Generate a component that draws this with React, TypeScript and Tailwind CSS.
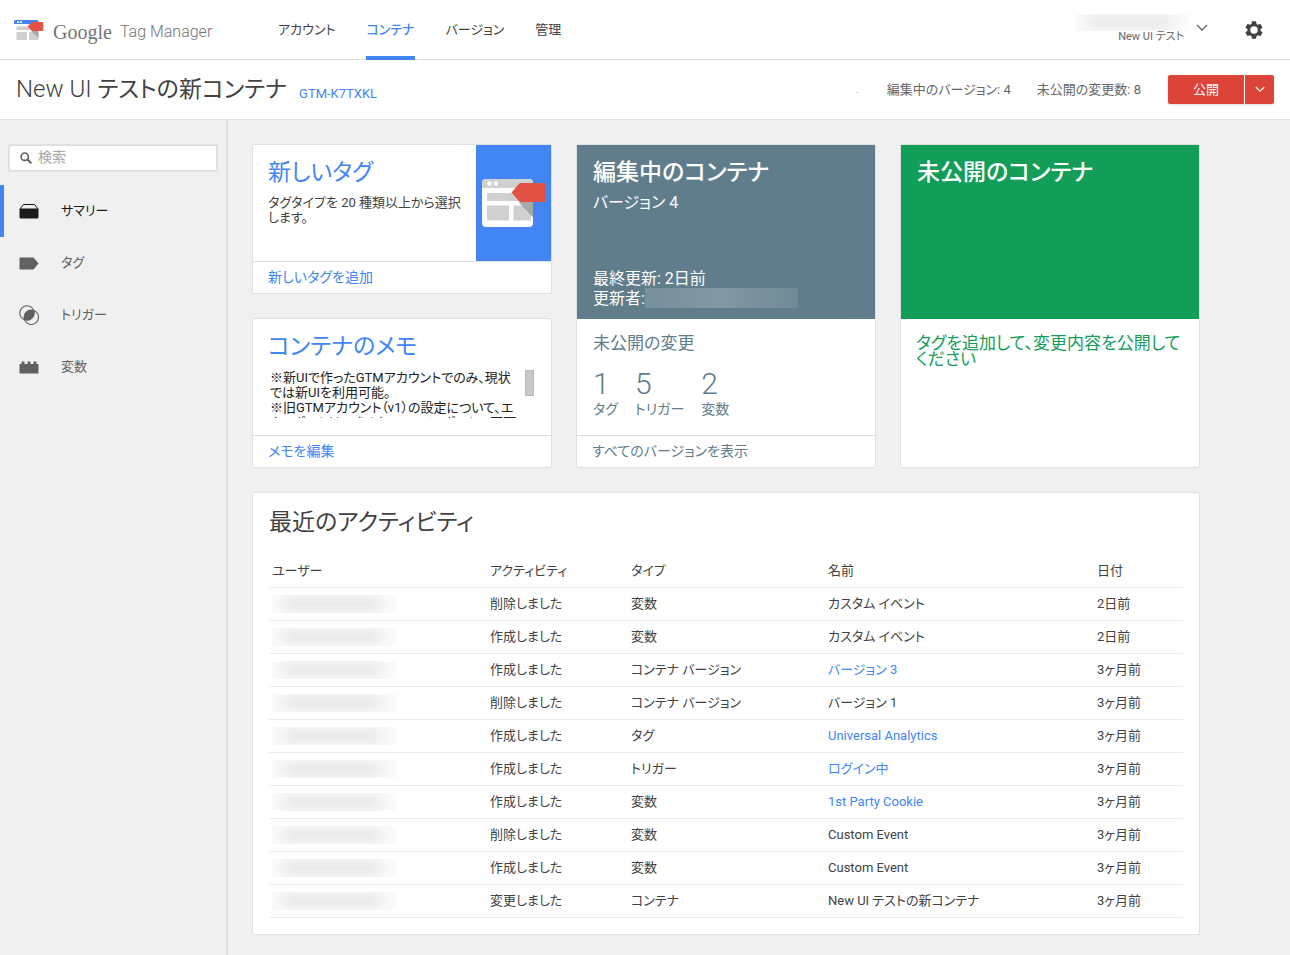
import type { ReactNode } from "react";

const card = "rounded-[2px] border border-[#e0e0e0] bg-white";
const cardFooter = "flex h-8 items-center border-t border-[#e0e0e0] px-[15px] pb-[2px] text-[14px]";
const heading = "text-[23px] leading-7";

function Chevron({ className }: { className: string }) {
  return (
    <svg className={className} viewBox="0 0 12 8" fill="none" stroke="currentColor" strokeWidth="1.3" aria-hidden="true">
      <path d="M1 1l5 5 5-5" />
    </svg>
  );
}

function BrandIcon() {
  return (
    <svg className="h-[22px] w-[30px]" viewBox="0 0 30 22" aria-hidden="true">
      <path fill="#4285f4" d="M1.500 1H23q1.500 0 1.500 1.500V5H0V2.500Q0 1 1.500 1z" />
      <path fill="#fff" d="M3 2.200h1.800V4H3zM6 2.200h1.800V4H6z" />
      <path fill="#cfcfcf" d="M2.500 7.500H17V11H2.500zM2.500 13h10.500v8H2.500zM15 13h9.500v8H15z" />
      <path fill="#a6a6a6" d="M17 12h7.500v6.500z" />
      <path fill="#e65245" d="M13.500 7.500 18 3h10.500q.8 0 .8.800v7.400q0 .8-.8.800H18z" />
    </svg>
  );
}

function TagArtwork() {
  return (
    <svg className="h-[50px] w-[64px]" viewBox="0 0 64 50" aria-hidden="true">
      <rect x="0" y="1" width="51" height="48" rx="4" fill="#fff" />
      <path fill="#d0d0d0" d="M4 1h43q4 0 4 4v5H0V5q0-4 4-4z" />
      <circle cx="7.500" cy="5.500" r="2.300" fill="#fff" />
      <circle cx="13.800" cy="5.500" r="2.300" fill="#fff" />
      <path fill="#d0d0d0" d="M5 15h32v8H5zM5 27.500h22v15H5zM31.500 27.500H49v15H31.500z" />
      <path fill="#a8a8a8" d="M36.500 24H51v15.500z" />
      <path fill="#e35044" d="M29.500 14.500 37 5.700q.7-.7 1.700-.7H62.500q1.500 0 1.500 1.500v16q0 1.500-1.500 1.500H38.700q-1 0-1.700-.7z" />
    </svg>
  );
}

function Redacted({ className }: { className: string }) {
  return (
    <div className={`overflow-hidden bg-[#fafafa] py-1 pr-4 pl-3 ${className}`}>
      <div className="h-full bg-[#e2e2e2] blur-[6px]" />
    </div>
  );
}

const navIcons: Record<string, ReactNode> = {
  summary: (
    <>
      <path d="M1 8 4 4q.3-.5 1-.5h10q.7 0 1 .5L19 8" fill="none" stroke="currentColor" strokeWidth="1" />
      <path d="M.5 7.500h19V16q0 1.500-1.500 1.500H2Q.5 17.500 .5 16z" fill="currentColor" />
    </>
  ),
  tag: <path d="M1 4.500h13.500L19.500 10.500l-5 6H1q-.5 0-.5-.5V5q0-.5.500-.5z" fill="currentColor" />,
  trigger: (
    <>
      <circle cx="8" cy="8" r="7.200" fill="none" stroke="currentColor" strokeWidth="1.100" />
      <circle cx="12.300" cy="12.300" r="7.200" fill="none" stroke="currentColor" strokeWidth="1.100" />
      <path d="M14.780 5.520A7.200 7.200 0 0 1 5.520 14.780 7.200 7.200 0 0 1 14.780 5.520z" fill="currentColor" />
    </>
  ),
  variable: (
    <path d="M.5 7H2.500V4.500h3V7h3V4.500h3V7h3V4.500h3V7h2v9.500H.5z" fill="currentColor" />
  ),
};

const sideItems = [
  { icon: "summary", label: "サマリー", active: true },
  { icon: "tag", label: "タグ", active: false },
  { icon: "trigger", label: "トリガー", active: false },
  { icon: "variable", label: "変数", active: false },
];

const tabs = [
  { label: "アカウント", active: false },
  { label: "コンテナ", active: true },
  { label: "バージョン", active: false },
  { label: "管理", active: false },
];

const stats = [
  { count: 1, label: "タグ" },
  { count: 5, label: "トリガー" },
  { count: 2, label: "変数" },
];

const rows = [
  { action: "削除しました", type: "変数", name: "カスタム イベント", link: false, date: "2日前" },
  { action: "作成しました", type: "変数", name: "カスタム イベント", link: false, date: "2日前" },
  { action: "作成しました", type: "コンテナ バージョン", name: "バージョン 3", link: true, date: "3ヶ月前" },
  { action: "削除しました", type: "コンテナ バージョン", name: "バージョン 1", link: false, date: "3ヶ月前" },
  { action: "作成しました", type: "タグ", name: "Universal Analytics", link: true, date: "3ヶ月前" },
  { action: "作成しました", type: "トリガー", name: "ログイン中", link: true, date: "3ヶ月前" },
  { action: "作成しました", type: "変数", name: "1st Party Cookie", link: true, date: "3ヶ月前" },
  { action: "削除しました", type: "変数", name: "Custom Event", link: false, date: "3ヶ月前" },
  { action: "作成しました", type: "変数", name: "Custom Event", link: false, date: "3ヶ月前" },
  { action: "変更しました", type: "コンテナ", name: "New UI テストの新コンテナ", link: false, date: "3ヶ月前" },
];

function Header() {
  return (
    <header className="flex h-15 items-stretch border-b border-[#e0e0e0] bg-white pr-[26px] pl-[14px]">
      <a href="#home" className="flex w-[264px] shrink-0 items-center text-[#757575]">
        <BrandIcon />
        <span className="ml-[9px] pt-1 font-['Liberation_Serif',serif] text-[20px] leading-6">Google</span>
        <span className="ml-2 pt-1 text-[16px] leading-6 font-light whitespace-nowrap">Tag Manager</span>
      </a>
      <nav className="flex gap-[31px]">
        {tabs.map((t) => (
          <a
            key={t.label}
            href="#tab"
            className={
              t.active
                ? "-mb-px flex items-center border-b-4 border-[#4285f4] pt-1 font-medium whitespace-nowrap text-[#4285f4]"
                : "flex items-center whitespace-nowrap"
            }
          >
            {t.label}
          </a>
        ))}
      </nav>
      <button type="button" className="mt-3 ml-auto flex h-8 items-center gap-2 text-[#666]" aria-label="アカウントを選択">
        <span className="flex flex-col items-end">
          <Redacted className="h-[17px] w-28" />
          <span className="pr-1 text-[11px] leading-3 whitespace-nowrap">New UI テスト</span>
        </span>
        <Chevron className="h-2 w-3" />
      </button>
      <button type="button" className="ml-[36px] text-[#424242]" aria-label="設定">
        <svg className="h-5 w-5" viewBox="1 1 22 22" fill="currentColor" aria-hidden="true">
          <path d="M19.140 12.940c.04-.3.060-.61.060-.94s-.02-.64-.07-.94l2.030-1.580a.49.490 0 0 0 .12-.61l-1.920-3.320a.488.488 0 0 0-.59-.22l-2.390.96c-.5-.38-1.030-.7-1.620-.94l-.36-2.540a.484.484 0 0 0-.48-.41h-3.840c-.24 0-.43.170-.47.410l-.36 2.540c-.59.240-1.130.570-1.620.940l-2.390-.96c-.22-.08-.47 0-.59.220L2.740 8.870c-.12.210-.08.470.12.610l2.030 1.580c-.05.300-.09.630-.09.940s.02.640.07.940l-2.030 1.580a.49.490 0 0 0-.12.610l1.920 3.320c.12.220.37.290.59.220l2.390-.96c.5.380 1.030.7 1.620.940l.36 2.540c.05.240.24.410.48.410h3.840c.24 0 .44-.17.470-.41l.36-2.540c.59-.24 1.130-.56 1.620-.94l2.390.96c.22.080.47 0 .59-.22l1.920-3.320c.12-.22.070-.47-.12-.61zM12 16.100a4.100 4.100 0 1 1 0-8.200 4.100 4.100 0 0 1 0 8.200z" />
        </svg>
      </button>
    </header>
  );
}

function TitleBar() {
  return (
    <div className="flex h-15 items-center border-b border-[#e0e0e0] bg-white px-4">
      <h1 className="text-[23px] leading-8 whitespace-nowrap">
        <span className="text-[24px] font-light">New UI </span>テストの新コンテナ
      </h1>
      <a href="#container" className="mt-2 ml-3 whitespace-nowrap text-[#4285f4]">
        GTM-K7TXKL
      </a>
      <div className="ml-auto flex items-center whitespace-nowrap text-[#666]">
        <span className="mr-7 text-[10px] text-[#dd9a6a]">.</span>
        <span>編集中のバージョン: 4</span>
        <span className="ml-[26px]">未公開の変更数: 8</span>
        <div className="ml-[27px] flex h-[29px] gap-px rounded-[2px] text-white shadow-sm">
          <button type="button" className="w-19 rounded-l-[2px] bg-[#db4437]">
            公開
          </button>
          <button type="button" className="flex w-[29px] items-center justify-center rounded-r-[2px] bg-[#db4437]" aria-label="公開オプション">
            <Chevron className="h-[7px] w-[10px]" />
          </button>
        </div>
      </div>
    </div>
  );
}

function Sidebar() {
  return (
    <aside className="w-57 shrink-0 border-r-2 border-[#e0e0e0] pt-6">
      <div className="mr-2 ml-2 flex h-7 items-center gap-[6px] rounded-[2px] border-2 border-[#e0e0e0] bg-white pl-[10px]">
        <svg className="h-3 w-3 shrink-0 text-[#616161]" viewBox="0 0 12 12" fill="none" stroke="currentColor" aria-hidden="true">
          <circle cx="4.700" cy="4.700" r="3.700" strokeWidth="1.600" />
          <path d="M7.500 7.500 11.300 11.300" strokeWidth="2" />
        </svg>
        <input
          type="search"
          aria-label="検索"
          placeholder="検索"
          className="w-full min-w-0 bg-transparent pb-[2px] text-[14px] leading-5 outline-none placeholder:text-[#a6a6a6]"
        />
      </div>
      <nav className="mt-[13px]">
        {sideItems.map((s) => (
          <a
            key={s.label}
            href="#section"
            className={
              s.active
                ? "flex h-13 items-center gap-[22px] border-l-4 border-[#4285f4] pl-[15px] text-[#1a1a1a]"
                : "flex h-13 items-center gap-[22px] border-l-4 border-transparent pl-[15px] text-[#616161]"
            }
          >
            <svg className="h-5 w-5" viewBox="0 0 20 20" aria-hidden="true">
              {navIcons[s.icon]}
            </svg>
            {s.label}
          </a>
        ))}
      </nav>
    </aside>
  );
}

function NewTagCard() {
  return (
    <section className={card}>
      <div className="flex h-[116px]">
        <div className="min-w-0 flex-1 pt-[14px] pr-2 pl-[15px]">
          <h2 className={`${heading} text-[#4285f4]`}>新しいタグ</h2>
          <p className="mt-2 leading-[15px]">タグタイプを 20 種類以上から選択します。</p>
        </div>
        <div className="flex w-[75px] items-center justify-center bg-[#4285f4]">
          <TagArtwork />
        </div>
      </div>
      <div className={cardFooter}>
        <a href="#new-tag" className="text-[#4285f4]">新しいタグを追加</a>
      </div>
    </section>
  );
}

function NotesCard() {
  return (
    <section className={card}>
      <div className="h-[116px] pt-[14px] pr-[17px] pl-[15px]">
        <h2 className={`${heading} text-[#4285f4]`}>コンテナのメモ</h2>
        <div className="mt-[9px] flex h-12 justify-between">
          <p className="overflow-hidden pl-[2px] leading-[15px] whitespace-nowrap text-[#212121]">
            ※新UIで作ったGTMアカウントでのみ、現状
            <br />
            では新UIを利用可能。
            <br />
            ※旧GTMアカウント（v1）の設定について、エ
            <br />
            クスポートはできるものの、インポートで不可
          </p>
          <div className="h-[26px] w-[9px] shrink-0 border border-[#b8b8b8] bg-[#c8c8c8]" />
        </div>
      </div>
      <div className={cardFooter}>
        <a href="#notes" className="text-[#4285f4]">メモを編集</a>
      </div>
    </section>
  );
}

function DraftCard() {
  return (
    <section className={`${card} flex flex-col text-[#607d8b]`}>
      <div className="flex h-[174px] flex-col bg-[#607d8b] px-4 pt-[14px] pb-[11px] text-white">
        <h2 className={`${heading} font-medium`}>編集中のコンテナ</h2>
        <p className="mt-[6px] text-[16px] leading-5">バージョン 4</p>
        <p className="mt-auto text-[16px] leading-[19px]">最終更新: 2日前</p>
        <div className="flex items-center text-[16px] leading-[19px]">
          更新者:
          <span className="h-5 w-[153px] bg-linear-to-r from-[#78909c] via-[#8298a3] to-[#708a96]" />
        </div>
      </div>
      <div className="flex-1 px-4 pt-[14px]">
        <h3 className="text-[17px] leading-5">未公開の変更</h3>
        <dl className="mt-4 flex gap-[17px]">
          {stats.map((s) => (
            <div key={s.label} className="flex flex-col-reverse">
              <dt className="text-[14px] leading-5">{s.label}</dt>
              <dd className="text-[30px] leading-[30px] font-light">{s.count}</dd>
            </div>
          ))}
        </dl>
      </div>
      <div className={cardFooter}>
        <a href="#versions">すべてのバージョンを表示</a>
      </div>
    </section>
  );
}

function PublishedCard() {
  return (
    <section className={card}>
      <div className="h-[174px] bg-[#129e59] px-4 pt-[14px] text-white">
        <h2 className={`${heading} font-medium`}>未公開のコンテナ</h2>
      </div>
      <p className="px-[15px] pt-4 text-[17px] leading-4 text-[#129e59]">タグを追加して、変更内容を公開してください</p>
    </section>
  );
}

function Activity() {
  return (
    <section className={`${card} mt-6 px-4 pb-4`}>
      <h2 className={`${heading} mt-4`}>最近のアクティビティ</h2>
      <table className="mt-[18px] w-full table-fixed border-collapse text-left">
        <thead>
          <tr className="h-8 border-b border-[#ebebeb]">
            <th className="w-[221px] pl-[3px] font-normal">ユーザー</th>
            <th className="w-[141px] font-normal">アクティビティ</th>
            <th className="w-[197px] font-normal">タイプ</th>
            <th className="font-normal">名前</th>
            <th className="w-[86px] font-normal">日付</th>
          </tr>
        </thead>
        <tbody>
          {rows.map((r, i) => (
            <tr key={i} className="h-[33px] border-b border-[#ebebeb]">
              <td className="pl-[3px]">
                <Redacted className="h-[18px] w-31" />
              </td>
              <td>{r.action}</td>
              <td>{r.type}</td>
              <td>
                {r.link ? (
                  <a href="#item" className="text-[#4285f4]">{r.name}</a>
                ) : (
                  r.name
                )}
              </td>
              <td>{r.date}</td>
            </tr>
          ))}
        </tbody>
      </table>
    </section>
  );
}

export default function App() {
  return (
    <div className="flex min-h-screen flex-col bg-[#f0f0f0] font-[Roboto,'Noto_Sans_CJK_JP',sans-serif] text-[13px] leading-5 text-[#424242] [font-feature-settings:'palt']" lang="ja">
      <Header />
      <TitleBar />
      <div className="flex flex-1">
        <Sidebar />
        <main className="min-w-0 flex-1 px-6 pt-6 pb-5">
          <div className="max-w-[948px]">
            <div className="grid gap-6 md:grid-cols-2 xl:grid-cols-3">
              <div className="flex flex-col gap-6">
                <NewTagCard />
                <NotesCard />
              </div>
              <DraftCard />
              <PublishedCard />
            </div>
            <Activity />
          </div>
        </main>
      </div>
    </div>
  );
}
